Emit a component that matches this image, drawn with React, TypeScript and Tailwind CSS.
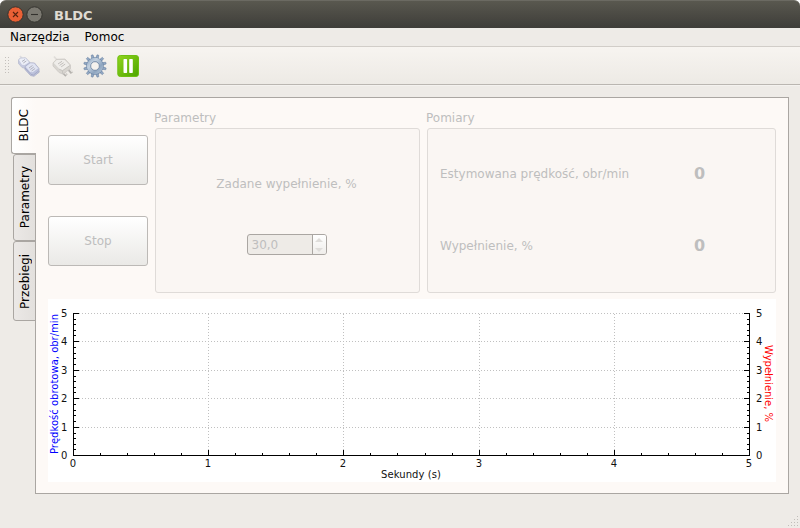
import React from 'react';

const Y_TICKS = [14, 42, 71, 99, 128, 156];
const X_TICKS = [25, 160, 295, 431, 566, 701];

function minorTicks(major: number[]) {
  const out: number[] = [];
  for (let i = 0; i < major.length - 1; i++) {
    for (let k = 1; k < 5; k++) out.push(Math.round(major[i] + ((major[i + 1] - major[i]) * k) / 5));
  }
  return out;
}

function Chart() {
  return (
    <svg width="728" height="183" viewBox="0 0 728 183" className="block bg-white" fontFamily="'DejaVu Sans', sans-serif" fontSize="10">
      <g stroke="#c0c0c0" strokeDasharray="1 2" shapeRendering="crispEdges">
        {Y_TICKS.slice(0, 5).map((y) => <line key={y} x1="25" x2="701" y1={y + 0.5} y2={y + 0.5} />)}
        {X_TICKS.slice(1, 5).map((x) => <line key={x} x1={x + 0.5} x2={x + 0.5} y1="15" y2="156" />)}
      </g>
      <g fill="#000" shapeRendering="crispEdges">
        <rect x="25" y="14" width="1" height="143" />
        <rect x="701" y="14" width="1" height="143" />
        <rect x="25" y="156" width="677" height="1" />
        {Y_TICKS.map((y) => (
          <g key={y}>
            <rect x="25" y={y} width="6" height="1" />
            <rect x="696" y={y} width="6" height="1" />
          </g>
        ))}
        {minorTicks(Y_TICKS).map((y) => (
          <g key={y}>
            <rect x="25" y={y} width="3" height="1" />
            <rect x="699" y={y} width="3" height="1" />
          </g>
        ))}
        {X_TICKS.map((x) => <rect key={x} x={x} y="151" width="1" height="6" />)}
        {minorTicks(X_TICKS).map((x) => <rect key={x} x={x} y="154" width="1" height="3" />)}
      </g>
      <g fill="#111">
        {Y_TICKS.map((y, i) => (
          <g key={y}>
            <text x="13" y={y + 4}>{5 - i}</text>
            <text x="708" y={y + 4}>{5 - i}</text>
          </g>
        ))}
        {X_TICKS.map((x, i) => <text key={x} x={x} y="168" textAnchor="middle">{i}</text>)}
        <text x="333" y="179" textLength="60">Sekundy (s)</text>
      </g>
      <text transform="translate(10 155) rotate(-90)" fill="#0000ff" textLength="140">Prędkość obrotowa, obr/min</text>
      <text transform="translate(717 46) rotate(90)" fill="#ff0000" textLength="77">Wypełnienie, %</text>
    </svg>
  );
}

function ConnectIcon() {
  return (
    <svg width="24" height="24" viewBox="0 0 24 24">
      <path d="M3 2l2.500 3" stroke="#dcdce0" strokeWidth="1.800" />
      <path d="M20 16.500l2 2" stroke="#b0b1bc" strokeWidth="2" />
      <path d="M1.500 6L3 4.200 8.500 3.800 12.500 8v4l-4 2.500L5 13.500 1.500 9.500z" fill="#c5c9df" stroke="#b9bccf" strokeWidth=".8" />
      <path d="M2 6l1.500-1.500 5-.2 3.500 4-4.500 2.700-2.500-.3z" fill="#eceef7" />
      <path d="M8 12.500l5-3.700 4.500.2 4.500 5.500v3.800L17 22.300l-3.500-.8-5.500-6z" fill="#bcc1db" stroke="#acb0c8" strokeWidth=".8" />
      <path d="M8.700 12.700l4.500-3.400 4 .2 4 4.800-5.500 4-2.500-.3z" fill="#e1e4f2" />
      <path d="M8 14l6 6.500 2.500.5 5-4" fill="none" stroke="#9ea3c0" strokeWidth=".8" />
      <path d="M5 7.500l3-2M6.300 9l3-2M12 14l3.500-2.500M13.300 15.500l3.500-2.500M14.600 17l3.500-2.500" stroke="#aaabb5" strokeWidth=".9" />
    </svg>
  );
}

function PlugIcon() {
  return (
    <svg width="24" height="24" viewBox="0 0 24 24">
      <path d="M3 2.500l3 3.500" stroke="#e1deda" strokeWidth="1.800" />
      <path d="M12 18l3.500 3.500M17 14.500l4 4.500" stroke="#b5b2ae" strokeWidth="3.200" />
      <path d="M12 17l3.500 3.500M17.500 13.500l4 4.500" stroke="#e9e6e2" strokeWidth="1.500" />
      <path d="M2 9l3.500-3.700L14 5l5.500 6v3.800L11.500 20 8 18.500 2 12z" fill="#d8d5d0" stroke="#cbc8c4" strokeWidth=".8" />
      <path d="M2.700 9l3-3 8 .1 5 5.100-7.200 5.100-3.300-1.600z" fill="#efedea" />
      <path d="M8.200 15.200l3.300 1.500 7.500-5.200M11.500 16.700v3" stroke="#c2bfbb" strokeWidth=".8" fill="none" />
      <path d="M7 10l4-2.700M8.600 11.400l4-2.700M10.200 12.800l4-2.700" stroke="#bcb9b5" strokeWidth=".9" />
    </svg>
  );
}

function GearIcon() {
  return (
    <svg width="24" height="24" viewBox="0 0 24 24">
      <defs>
        <linearGradient id="steel" gradientUnits="userSpaceOnUse" x1="3" y1="3" x2="21" y2="21">
          <stop offset="0" stopColor="#7f9abb" />
          <stop offset=".35" stopColor="#c4d1df" />
          <stop offset=".65" stopColor="#8ea5c0" />
          <stop offset="1" stopColor="#c6d1dd" />
        </linearGradient>
      </defs>
      {Array.from({ length: 12 }, (_, i) => (
        <path key={i} d="M10.600 5l.5-4.300h1.800l.5 4.300z" fill="#93a9c4" stroke="#647d9d" strokeWidth=".5" transform={`rotate(${i * 30 + 15} 12 12)`} />
      ))}
      <circle cx="12" cy="12" r="6.400" fill="none" stroke="#6d86a6" strokeWidth="4.600" />
      <circle cx="12" cy="12" r="6.300" fill="none" stroke="url(#steel)" strokeWidth="3.800" />
      <circle cx="12" cy="12" r="4.300" fill="#f5f2ee" stroke="#7188a4" strokeWidth=".8" />
    </svg>
  );
}

function PauseIcon() {
  return (
    <svg width="24" height="24" viewBox="0 0 24 24">
      <defs>
        <linearGradient id="green" x1="0" y1="0" x2="1" y2="1">
          <stop offset="0" stopColor="#91d51d" />
          <stop offset="1" stopColor="#4da500" />
        </linearGradient>
      </defs>
      <rect x="1.800" y="1.500" width="20.700" height="21" rx="2.500" fill="url(#green)" stroke="#6fbf12" />
      <rect x="7.500" y="5" width="3.600" height="14" rx=".7" fill="#fff" />
      <rect x="13.200" y="5" width="3.600" height="14" rx=".7" fill="#fff" />
    </svg>
  );
}

function WindowButton({ close }: { close?: boolean }) {
  return (
    <svg width="17" height="17" viewBox="0 0 17 17">
      <circle cx="8.500" cy="8.500" r="7.700" fill={close ? '#ea6035' : '#7b7971'} stroke="#35342f" />
      <path d={close ? 'M6 6l5 5M11 6l-5 5' : 'M5 8.500h7'} stroke={close ? '#56230f' : '#33322e'} strokeWidth="1.100" />
    </svg>
  );
}

function SideTab({ label, className }: { label: string; className: string }) {
  return (
    <div className={`flex items-center justify-center border border-[#aaa6a2] ${className}`}>
      <span className="rotate-180 whitespace-nowrap leading-[14px] text-black [writing-mode:vertical-rl]">{label}</span>
    </div>
  );
}

function PushButton({ label }: { label: string }) {
  return (
    <div className="flex h-[50px] w-[100px] items-center justify-center rounded-[3px] border border-[#bcb9b6] bg-linear-to-b from-white to-[#eae9e6] pb-px leading-[14px]">
      {label}
    </div>
  );
}

const GROUP = 'rounded-[3px] border border-[#dfdbd8] bg-[#faf6f3]';

export default function App() {
  return (
    <div className="h-[528px] w-[800px] overflow-hidden bg-white font-['DejaVu_Sans',sans-serif] text-[12px]">
      <div className="flex h-full flex-col rounded-t-[6px] bg-[#eeebe7]">
        <header className="flex h-7 shrink-0 items-center rounded-t-[6px] border-t border-[#6b6a62] bg-linear-to-b from-[#59584f] to-[#3e3d39] pl-[7px]">
          <WindowButton close />
          <span className="ml-[2px]"><WindowButton /></span>
          <h1 className="ml-[11px] pt-[2px] text-[13px] leading-4 font-bold text-[#dfdbd2]">BLDC</h1>
        </header>
        <nav className="flex h-[19px] shrink-0 gap-[15px] border-b border-[#d1cdc8] bg-[#eeebe7] pl-[10px] leading-[18px] text-black">
          <span>Narzędzia</span>
          <span>Pomoc</span>
        </nav>
        <div className="flex h-[38px] shrink-0 items-center border-b border-[#bab6b1] bg-linear-to-b from-[#f7f4f0] to-[#edeae5] pl-[5px]">
          <svg width="5" height="18" fill="#c3bfbb" className="mr-[6px]">
            {[0, 3, 6, 9, 12, 15].map((y) => <path key={y} d={`M0 ${y}h1v1h-1zM3 ${y}h1v1h-1z`} />)}
          </svg>
          <div className="flex gap-[10px] pl-px">
            <ConnectIcon />
            <PlugIcon />
            <span className="-ml-[2px]"><GearIcon /></span>
            <span className="-ml-px"><PauseIcon /></span>
          </div>
        </div>
        <main className="flex flex-1 items-start border-t border-[#f4f2ef] pt-[11px] pl-[11px]">
          <div className="z-10 -mr-px flex w-[25px] shrink-0 flex-col items-end">
            <SideTab label="BLDC" className="h-[57px] w-[25px] rounded-l-[3px] border-r-0 bg-linear-to-r from-white to-[#fdf9f6]" />
            <SideTab label="Parametry" className="h-[87px] w-[23px] rounded-l-[3px] bg-linear-to-r from-[#ebe8e6] to-[#e3e0dd]" />
            <SideTab label="Przebiegi" className="h-[80px] w-[23px] rounded-l-[3px] bg-linear-to-r from-[#ebe8e6] to-[#e3e0dd]" />
          </div>
          <section className="h-[397px] w-[754px] shrink-0 border border-[#aaa6a2] bg-[#fdf9f6] pl-3">
            <div className="flex h-[201px] items-start text-[#bebebe]">
              <div className="mt-[37px] flex w-[107px] flex-col gap-[31px]">
                <PushButton label="Start" />
                <PushButton label="Stop" />
              </div>
              <div className="w-[265px] pt-[13px]">
                <div className="-ml-px h-[17px] leading-[14px]">Parametry</div>
                <div className={`flex h-[165px] flex-col items-center pt-[48px] pr-[2px] ${GROUP}`}>
                  <span className="leading-[14px]">Zadane wypełnienie, %</span>
                  <div className="mt-[43px] flex h-[21px] w-[80px] overflow-hidden rounded-[3px] border border-[#aaa6a2] bg-[#eeebe7]">
                    <span className="flex-1 pl-1 leading-[20px]">30,0</span>
                    <span className="flex w-[14px] items-center justify-center border-l border-[#aaa6a2] bg-linear-to-b from-white to-[#efedea]">
                      <svg width="8" height="14" fill="#dfddda"><path d="M0 4l4-4 4 4zM0 10h8l-4 4z" /></svg>
                    </span>
                  </div>
                </div>
              </div>
              <div className="ml-[7px] w-[349px] pt-[13px]">
                <div className="-ml-px h-[17px] leading-[14px]">Pomiary</div>
                <div className={`flex h-[165px] flex-col gap-[56px] pt-[37px] pl-3 ${GROUP}`}>
                  <div className="flex h-4 items-center leading-4">
                    <span className="w-[254px]">Estymowana prędkość, obr/min</span>
                    <b className="text-[16px]">0</b>
                  </div>
                  <div className="flex h-4 items-center leading-4">
                    <span className="w-[254px]">Wypełnienie, %</span>
                    <b className="text-[16px]">0</b>
                  </div>
                </div>
              </div>
            </div>
            <Chart />
          </section>
        </main>
        <footer className="flex shrink-0 justify-end pr-[2px] pb-px">
          <svg width="10" height="11" fill="#c1beba">
            {[0, 3, 6, 9].flatMap((y, r) => [0, 3, 6, 9].filter((_, c) => c >= 3 - r).map((x) => <rect key={`${x}-${y}`} x={x} y={y} width="1" height="1" />))}
          </svg>
        </footer>
      </div>
    </div>
  );
}
